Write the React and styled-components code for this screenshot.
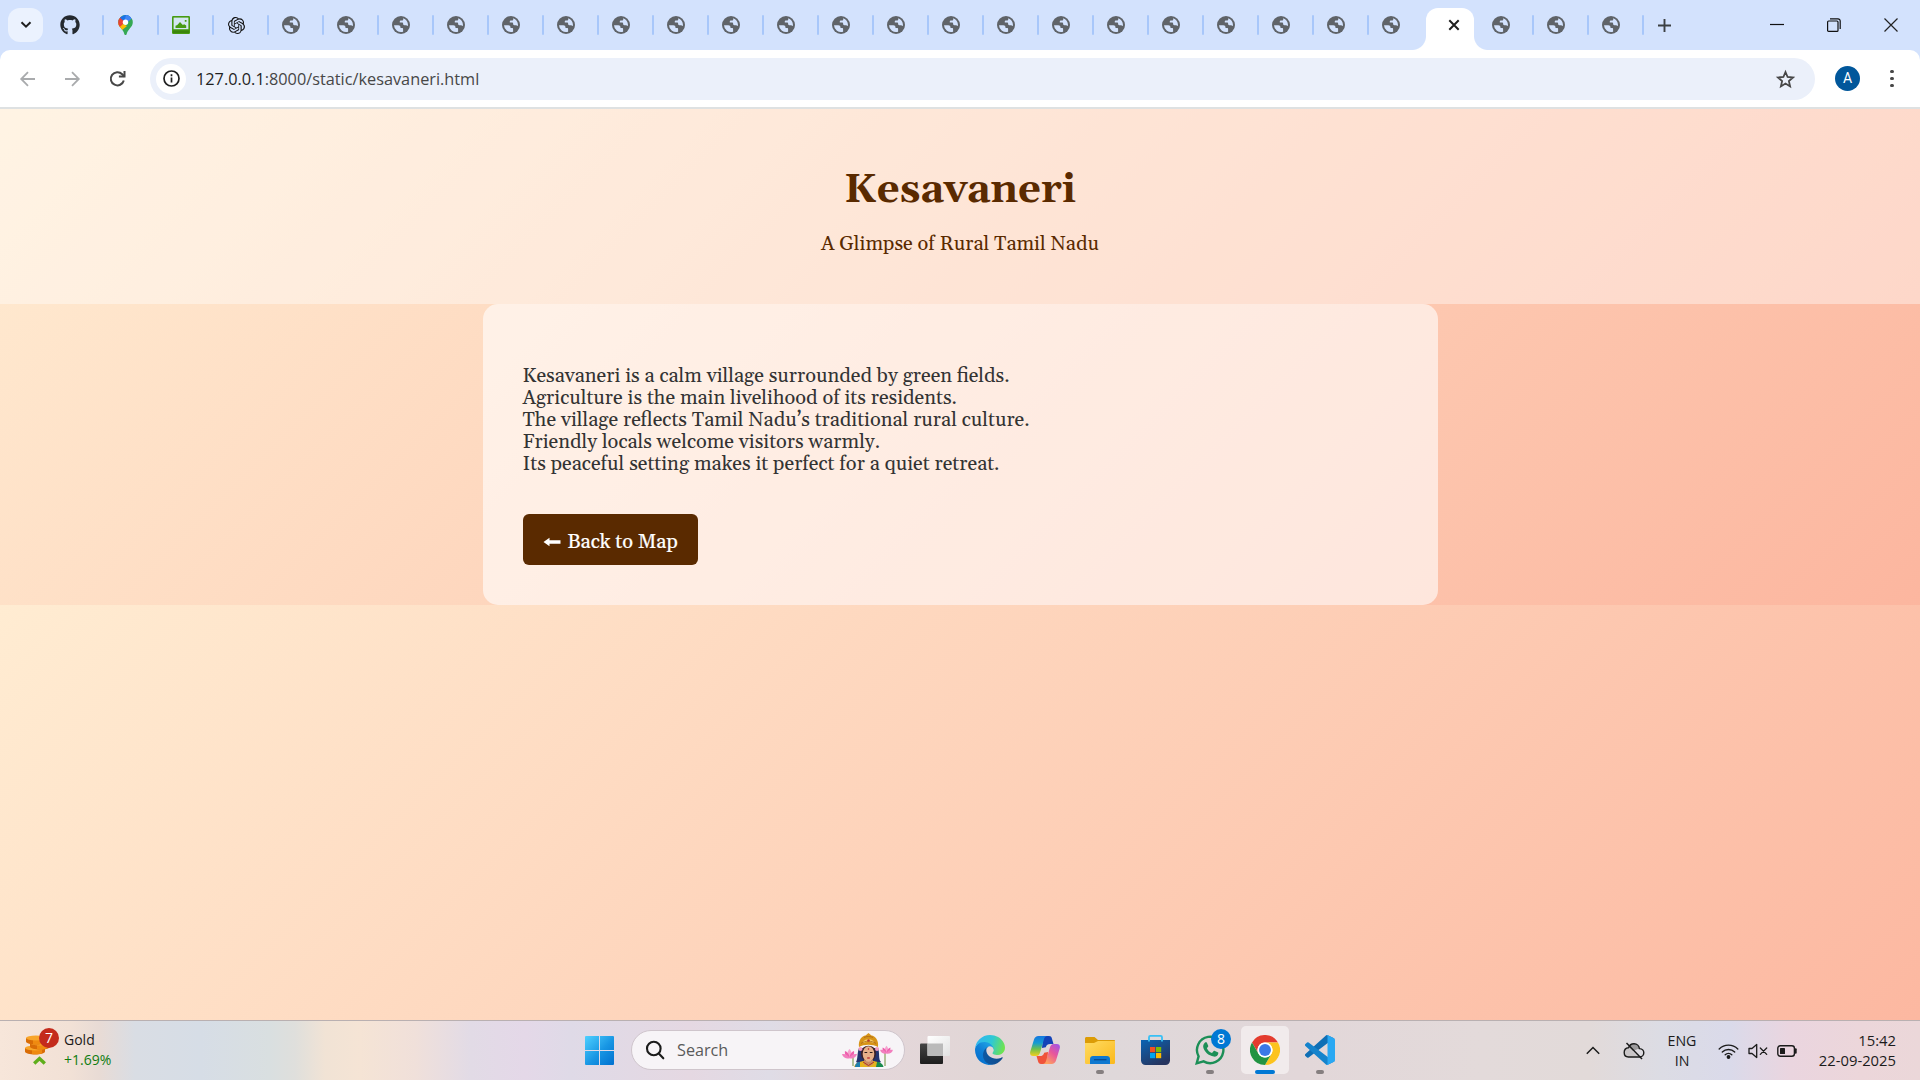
import React from "react";
import styled, { createGlobalStyle } from "styled-components";
import { FaGithub } from "react-icons/fa";
import { SiOpenai } from "react-icons/si";

const GlobalStyle = createGlobalStyle`
  * { box-sizing: border-box; }
  html, body { margin: 0; padding: 0; }
  body { overflow: hidden; }
  svg { display: block; flex: none; }
`;

const sans = `"Open Sans", "Noto Sans", sans-serif`;
const serif = `"Gelasio", "Liberation Serif", serif`;

const Screen = styled.div`
  display: flex;
  flex-direction: column;
  width: 1920px;
  height: 1080px;
  overflow: hidden;
  font-family: ${sans};
`;

/* ---------- Browser chrome ---------- */

const TabStrip = styled.div`
  display: flex;
  align-items: flex-start;
  height: 50px;
  flex: none;
  background: #d3e2fd;
`;

const TabSearch = styled.div`
  display: grid;
  place-items: center;
  width: 35px;
  height: 34px;
  margin: 8px 6px 0 8px;
  border-radius: 12px;
  background: #ebf2fe;
`;

const Tab = styled.div`
  display: flex;
  align-items: center;
  justify-content: space-between;
  width: 55px;
  height: 50px;
  padding-left: ${(p) => p.$pad || 13}px;
  flex: none;
`;

const Separator = styled.span`
  width: 2.5px;
  height: 20px;
  margin-bottom: 1px;
  border-radius: 2px;
  background: #a8c7fa;
`;

const ActiveTab = styled.div`
  display: grid;
  place-items: center;
  width: 48px;
  height: 42px;
  margin: 8px 5px 0 2px;
  padding: 0 0 8px 7px;
  border-radius: 12px 12px 0 0;
  background: #fff;
  position: relative;
  flex: none;
  &::before,
  &::after {
    content: "";
    position: absolute;
    bottom: 0;
    width: 14px;
    height: 14px;
  }
  &::before {
    left: -14px;
    background: radial-gradient(circle at 0 0, transparent 13.5px, #fff 14.5px);
  }
  &::after {
    right: -14px;
    background: radial-gradient(circle at 100% 0, transparent 13.5px, #fff 14.5px);
  }
`;

const NewTab = styled.div`
  display: flex;
  align-items: center;
  height: 50px;
  margin-left: 14px;
`;

const WindowControls = styled.div`
  display: flex;
  align-items: center;
  gap: 43px;
  height: 49px;
  margin: 0 22px 0 auto;
`;

const ToolbarBack = styled.div`
  flex: none;
  background: #d3e2fd;
`;

const Toolbar = styled.div`
  display: flex;
  align-items: center;
  height: 59px;
  padding: 0 20px 0 18px;
  background: #fff;
  border-bottom: 2px solid #dee1e2;
  border-radius: 10px 10px 0 0;
`;

const NavButtons = styled.div`
  display: flex;
  align-items: center;
  gap: 25px;
  width: 132px;
`;

const Omnibox = styled.div`
  display: flex;
  align-items: center;
  width: 1665px;
  height: 42px;
  padding: 0 20px 0 6px;
  border-radius: 21px;
  background: #ebf0fa;
`;

const SiteInfo = styled.span`
  display: grid;
  place-items: center;
  width: 30px;
  height: 30px;
  margin-right: 10px;
  border-radius: 50%;
  background: #fff;
`;

const Url = styled.span`
  flex: 1;
  padding-top: 1px;
  font-size: 16.3px;
  line-height: 22px;
  color: #474747;
`;

const Host = styled.span`
  color: #1f1f1f;
`;

const Avatar = styled.span`
  display: grid;
  place-items: center;
  width: 25px;
  height: 25px;
  margin: 0 0 0 20px;
  border-radius: 50%;
  background: #01579b;
  color: #fff;
  font: 14px/25px Roboto, sans-serif;
`;

const MenuDots = styled.span`
  display: grid;
  justify-items: center;
  gap: 3.2px;
  width: 4px;
  margin-left: 30px;
  i {
    width: 3.8px;
    height: 3.8px;
    border-radius: 50%;
    background: #474747;
  }
`;

/* ---------- Page ---------- */

const Page = styled.div`
  flex: 1;
  min-height: 0;
  font-family: ${serif};
  background: linear-gradient(135deg, #ffecd2, #fcb69f) 0 0 / 100% 496px repeat-y;
`;

const Header = styled.header`
  display: flex;
  flex-direction: column;
  align-items: center;
  height: 195px;
  padding-top: 59px;
  background: rgba(255, 255, 255, 0.4);
  color: #5a2a00;
`;

const Title = styled.h1`
  margin: 0 0 19px;
  font-size: 40px;
  line-height: 46px;
  font-weight: 700;
`;

const Subtitle = styled.p`
  margin: 0;
  font-size: 20px;
  line-height: 22px;
`;

const Card = styled.main`
  width: 955px;
  height: 301px;
  margin: 0 auto;
  padding: 61px 40px 40px;
  border-radius: 15px;
  background: rgba(255, 255, 255, 0.6);
`;

const Story = styled.p`
  margin: 0 0 39px;
  font-size: 20px;
  line-height: 22px;
  color: #333;
`;

const BackLink = styled.a`
  display: flex;
  align-items: center;
  width: 175px;
  height: 51px;
  padding: 5px 0 0 20px;
  gap: 7px;
  border-radius: 6px;
  background: #5a2a00;
  color: #fff;
  font-size: 20px;
  line-height: 22px;
  white-space: nowrap;
  -webkit-text-stroke: 0.2px #fff;
`;

/* ---------- Taskbar ---------- */

const Taskbar = styled.footer`
  display: flex;
  align-items: stretch;
  height: 60px;
  flex: none;
  border-top: 1px solid #b9b0b1;
  font-family: ${sans};
  color: #1b1b1b;
  background: linear-gradient(
    90deg,
    #f7e6da 0, #f2e1d6 70px, #e8dbd5 100px, #d9dde4 135px, #d6dde6 200px,
    #d9dfe0 270px, #dfdfdc 295px, #f1e3d5 325px, #f5e4d5 360px, #f0e0da 415px,
    #e2dbe6 470px, #e4d8e8 525px, #dfdae7 570px, #e5d8e2 690px, #dfdce6 770px,
    #e5d7db 850px, #e1d6d6 980px, #dfd8da 1110px, #e2d7d9 1300px, #e3dada 1480px,
    #e2dad9 1590px, #dcdce4 1660px, #dadaea 1730px, #ead5df 1790px,
    #ecd6da 1860px, #ebd7d9 1920px
  );
`;

const Widgets = styled.div`
  display: flex;
  width: 585px;
  padding-left: 25px;
`;

const WidgetIcon = styled.div`
  position: relative;
  width: 39px;
  padding-top: 14px;
`;

const Badge = styled.span`
  position: absolute;
  display: grid;
  place-items: center;
  top: ${(p) => p.$top}px;
  left: ${(p) => p.$left}px;
  width: 20px;
  height: 20px;
  border-radius: 50%;
  background: ${(p) => p.$color};
  color: #fff;
  font-size: 14px;
  line-height: 20px;
`;

const WidgetText = styled.div`
  padding-top: 9px;
  font-size: 14px;
  line-height: 20px;
`;

const Rise = styled.div`
  color: #107c10;
`;

const Center = styled.div`
  display: flex;
  align-items: center;
`;

const SearchBox = styled.div`
  display: flex;
  align-items: center;
  width: 274px;
  height: 40px;
  margin: 0 6px 1px 17px;
  padding: 0 10px 0 13px;
  border: 1px solid #cfc5cc;
  border-radius: 20px;
  background: #f7f4f7;
  color: #5a5a5a;
  font-size: 16.2px;
`;

const SearchLabel = styled.span`
  flex: 1;
  padding-left: 12px;
  line-height: 22px;
`;

const AppButton = styled.div`
  position: relative;
  display: grid;
  place-items: center;
  width: 48px;
  height: 48px;
  margin: 0 7px 1px 0;
  border-radius: 5px;
  background: ${(p) => (p.$active ? "#f1ebec" : "transparent")};
  &::after {
    content: "";
    position: absolute;
    bottom: 0;
    left: 50%;
    width: ${(p) => p.$bar || 0}px;
    height: 4px;
    border-radius: 2px;
    transform: translateX(-50%);
    background: ${(p) => (p.$active ? "#0078d4" : "#857f80")};
  }
`;

const Tray = styled.div`
  display: flex;
  align-items: center;
  margin-left: auto;
  padding-right: 24px;
  line-height: 20px;
`;

const Overflow = styled.span`
  display: flex;
  align-items: center;
  gap: 23px;
`;

const Language = styled.div`
  width: 40px;
  margin: 0 16px 0 17px;
  text-align: center;
  font-size: 14.2px;
`;

const Status = styled.div`
  display: flex;
  align-items: center;
  gap: 9px;
`;

const Clock = styled.div`
  width: 98px;
  padding-bottom: 2px;
  text-align: right;
  font-size: 14.8px;
`;

/* ---------- Icons ---------- */

const Globe = () => (
  <svg width="18" height="18" viewBox="0 0 18 18">
    <circle cx="9" cy="9" r="9" fill="#5f6368" />
    <path fill="#d3e2fd" d="M11.200 2.300c2.800.9 4.800 3.500 4.800 6.700 0 .400 0 .700-.1 1-.6-.5-1.300-.7-2-.7h-1.600c-.7 0-1.200-.5-1.200-1.200v-.9c0-.4-.3-.7-.7-.7H7.800V5.300c0-.5.4-.8.800-.8h1.500c.6 0 1.100-.5 1.100-1.100z" />
    <path fill="#d3e2fd" d="M2 9.200h4.300c1.300 0 2.200.9 2.200 2.100v.7h1.600c.6 0 1 .4 1 1v2.700A7 7 0 0 1 2 9.200z" />
  </svg>
);

const MapPin = () => (
  <svg width="15" height="20" viewBox="0 0 15 20">
    <defs><clipPath id="pin"><path d="M7.500 0A7.300 7.300 0 0 0 .2 7.300c0 2.600 1.300 4.300 3 6.300 1.700 2 2.600 3.500 3.100 5.300.2.700.5 1.100 1.200 1.100s1-.4 1.200-1.100c.5-1.800 1.400-3.300 3.100-5.300 1.700-2 3-3.700 3-6.300A7.300 7.300 0 0 0 7.500 0z" /></clipPath></defs>
    <g clipPath="url(#pin)">
      <path fill="#34a853" d="M0 0h15v20H0z" />
      <path fill="#fbbc04" d="M0 8l5.600 1.200L9 11 3 16H0z" />
      <path fill="#ea4335" d="M0 10V1l2-1 5.500 6.500L1.900 12z" />
      <path fill="#1a73e8" d="M1.700 2.600L6 0h8l1 2-7 6-2.500-2.200z" />
      <path fill="#4285f4" d="M8 0h5l1 3-5 5-2.500-2z" />
    </g>
    <circle cx="7.500" cy="7.200" r="2.700" fill="#fff" />
  </svg>
);

const Picture = () => (
  <svg width="18" height="18" viewBox="0 0 18 18">
    <rect width="18" height="18" rx="1.200" fill="#469b12" />
    <path fill="#d3e6f0" d="M1.600 1.600h14.800v11.600H1.600z" />
    <path fill="#469b12" d="M3.500 12V9.800L5.300 9 8 6l2.800 3 1.400-.8 2 1.300V12zM12.800 4h1.700v1.700h-1.700z" />
    <path fill="#3b850c" d="M1 14.500h16V17H1z" />
  </svg>
);

const line = { fill: "none", stroke: "currentColor" };

const Coins = () => (
  <svg width="24" height="20" viewBox="0 0 24 20">
    {[[0, 12], [5, 7], [1, 2]].map(([x, y]) => (
      <g key={y}>
        <path fill="#d96c06" d={`M${x} ${y + 1}v3.500c0 4 20 4 20 0V${y + 1}z`} />
        <path fill="#ef8a10" d={`M${x + 7} ${y + 2}v5c4 .5 8 .2 10-.8V${y + 2}z`} />
        <ellipse cx={x + 10} cy={y + 1} rx="10" ry="2.500" fill="#f8a52a" />
      </g>
    ))}
  </svg>
);

const UpMark = styled.svg`
  margin: 1px 0 0 8px;
`;

const WindowsLogo = () => (
  <svg width="29" height="29" viewBox="0 0 29 29">
    <defs><linearGradient id="win" x1="0" y1="0" x2="29" y2="29" gradientUnits="userSpaceOnUse"><stop stopColor="#4fd0ff" /><stop offset=".55" stopColor="#1795e3" /><stop offset="1" stopColor="#0070cf" /></linearGradient></defs>
    <path fill="url(#win)" d="M1 0h13v14H0V1a1 1 0 0 1 1-1zM15 0h13a1 1 0 0 1 1 1v13H15zM0 15h14v14H1a1 1 0 0 1-1-1zM15 15h14v13a1 1 0 0 1-1 1H15z" />
  </svg>
);

const lotus = (
  <g>
    <path fill="#f6a3cf" d="M0 0c-3-3-2-6 0-8 2 2 3 5 0 8z" />
    <path fill="#ef5fae" d="M0 1c-4-1-5-4-4.500-7C-1.500-5 0-2 0 1c0-3 1.500-6 4.500-7C5 -3 4 0 0 1z" />
    <path fill="#f27fbe" d="M0 1.500C-4 2-7-.5-7.500-3-4-3.500-1-2 0 1.500 1-2 4-3.500 7.500-3 7-.5 4 2 0 1.500z" />
  </g>
);

const Goddess = () => (
  <svg width="52" height="34" viewBox="0 0 52 34">
    <path d="M11 23v10M43 19v14" stroke="#6f8f3a" strokeWidth="1" fill="none" />
    <g transform="translate(7.500 24)">{lotus}</g>
    <g transform="translate(44.500 19.500) scale(.85)">{lotus}</g>
    <path fill="#24346e" d="M17 15c-2 5-1 11-3 14 4 3 20 3 25 0-3-3-1-9-3-14z" />
    <path fill="#e6b21e" d="M12 34c1-4 5-5 9-6h11c4 1 7 2 9 6z" />
    <path fill="#188a4d" d="M35 29c3 0 6 2 6.500 5H34z" />
    <path fill="#1d7fae" d="M13 34c0-3 2-5 5-5v5z" />
    <path fill="#c98c66" d="M22 25h9v6l-4.500 3-4.500-3z" />
    <path fill="#3c2228" d="M19 21c-1-11 16-11 15 0-.5 5-3 7-7.500 7S19.500 26 19 21z" />
    <ellipse cx="26.500" cy="21" rx="5.800" ry="7.700" fill="#e6b08a" />
    <path fill="#d79418" d="M17 14c-1-7 3-11 6.500-11.500L26.500 0l3 2.500C33 3 37 7 36 14c-5-3-14-3-19 0z" />
    <path fill="#f6d064" d="M21 10c0-5 11-5 11 0-3-1.500-8-1.500-11 0z" />
    <path stroke="#a8661a" strokeWidth=".8" fill="none" d="M19 10.500c4-3 11-3 15 0M22 4.500c2-1.300 7-1.300 9 0" />
    <circle cx="26.500" cy="7.500" r="1.300" fill="#b63a25" />
    <circle cx="18.500" cy="16" r="2" fill="#f09ac0" />
    <circle cx="35" cy="16" r="2" fill="#f09ac0" />
    <path d="M22.500 19.500h2.700M27.800 19.500h2.700" stroke="#2b1a1a" strokeWidth="1.200" />
    <circle cx="26.500" cy="16" r=".8" fill="#c4201c" />
    <path d="M25.200 25h2.600" stroke="#b8272b" strokeWidth="1.300" />
    <path d="M21 29l5.500 3.500L32 29" stroke="#b43a1a" strokeWidth="1" fill="none" />
  </svg>
);

const TaskView = () => (
  <svg width="30" height="28" viewBox="0 0 30 28">
    <defs>
      <linearGradient id="tvd" x2="0" y2="1"><stop stopColor="#454545" /><stop offset="1" stopColor="#1d1d1d" /></linearGradient>
      <linearGradient id="tvl" x2="1" y2="1"><stop stopColor="#fff" /><stop offset="1" stopColor="#e2e2e2" /></linearGradient>
    </defs>
    <rect x="0" y="7.500" width="23" height="20.500" rx="1" fill="url(#tvd)" />
    <rect x="7.500" y="0" width="22.500" height="20" rx="1" fill="url(#tvl)" />
    <path fill="#bababa" d="M7.500 7.500H23V20H7.500z" />
  </svg>
);

const Edge = () => (
  <svg width="30" height="30" viewBox="0 0 256 256">
    <defs>
      <linearGradient id="e1" x1="64" y1="177" x2="242" y2="177" gradientUnits="userSpaceOnUse"><stop stopColor="#0c59a4" /><stop offset="1" stopColor="#114a8b" /></linearGradient>
      <linearGradient id="e2" x1="140" y1="100" x2="40" y2="220" gradientUnits="userSpaceOnUse"><stop stopColor="#1b9de2" /><stop offset=".5" stopColor="#0f7fd6" /><stop offset="1" stopColor="#0673d0" /></linearGradient>
      <linearGradient id="e3" x1="20" y1="60" x2="240" y2="130" gradientUnits="userSpaceOnUse"><stop stopColor="#2fb8ee" /><stop offset=".5" stopColor="#2fc8d4" /><stop offset="1" stopColor="#6fe34e" /></linearGradient>
    </defs>
    <path fill="url(#e1)" d="M231 190.500c-3.400 1.800-6.900 3.400-10.500 4.700a101.900 101.900 0 0 1-35.900 6.500c-47.300 0-88.500-32.500-88.500-74.300a31.500 31.500 0 0 1 16.400-27.300c-42.800 1.800-53.800 46.400-53.800 72.500 0 73.900 68.100 81.400 82.800 81.400 7.900 0 19.800-2.300 27-4.600l1.300-.4a128.300 128.300 0 0 0 66.600-52.800 4 4 0 0 0-5.400-5.700z" />
    <path fill="url(#e2)" d="M105.700 241.400a79.200 79.200 0 0 1-22.700-21.300 80.700 80.700 0 0 1 29.500-120c3.200-1.500 8.500-4.100 15.600-4a32.400 32.400 0 0 1 25.700 13 31.900 31.900 0 0 1 6.300 18.700c0-.2 24.500-79.600-80-79.600-43.900 0-80 41.700-80 78.200a130.200 130.200 0 0 0 12.100 56 128 128 0 0 0 156.400 67 75.500 75.500 0 0 1-62.800-8z" />
    <path fill="url(#e3)" d="M152.300 148.900c-.9 1-3.400 2.500-3.400 5.600 0 2.600 1.700 5.200 4.800 7.300 14.300 10 41.400 8.600 41.500 8.600a59.600 59.600 0 0 0 30.300-8.300 61.400 61.400 0 0 0 30.400-52.900c.3-22.400-8-37.300-11.300-43.900C223.500 23.900 177.700 0 128 0A128 128 0 0 0 0 126.200c.5-36.500 36.800-66 80-66 3.500 0 23.500.3 42 10a72.600 72.600 0 0 1 30.900 29.300c6.100 10.600 7.200 24.100 7.200 29.500s-2.700 13.300-7.800 19.900z" />
  </svg>
);

const Copilot = () => (
  <svg width="30" height="28" viewBox="0 0 30 28">
    <defs>
      <linearGradient id="c1" x2="0" y2="1"><stop stopColor="#1677e0" /><stop offset=".35" stopColor="#159bd2" /><stop offset=".65" stopColor="#6dc04c" /><stop offset="1" stopColor="#f3cf1d" /></linearGradient>
      <linearGradient id="c2" x1="1" x2=".3" y2="1"><stop stopColor="#9a54ee" /><stop offset=".5" stopColor="#e8569b" /><stop offset="1" stopColor="#ffa25e" /></linearGradient>
    </defs>
    <path fill="#1443b8" d="M13 0h6c1.700 0 2.400.8 2.900 2.400L23.500 8h-3.300c-2.500 0-3.700.8-4.400 3.300L12 12z" />
    <path fill="#f0533b" d="M17 28h-6c-1.700 0-2.500-.8-2.900-2.400L6.500 20h3.300c2.500 0 3.700-.8 4.400-3.300L18 16z" />
    <path fill="url(#c1)" d="M8.500 0H17c-2 .3-2.600 1.700-3.200 3.700l-3.500 12c-.8 2.700-1.500 4.300-4.300 4.300H3.200c-2.700 0-3.600-2-2.900-4.500L4 3.500C4.700 1.200 6.200 0 8.500 0z" />
    <path fill="url(#c2)" d="M21.500 28H13c2-.3 2.600-1.700 3.200-3.700l3.500-12c.8-2.700 1.500-4.300 4.300-4.300h2.800c2.700 0 3.600 2 2.900 4.500L26 24.500c-.7 2.300-2.200 3.500-4.500 3.500z" />
  </svg>
);

const Explorer = () => (
  <svg width="30" height="27" viewBox="0 0 30 27">
    <defs><linearGradient id="fx" x2="1" y2="1"><stop stopColor="#ffdb62" /><stop offset="1" stopColor="#fbb91b" /></linearGradient></defs>
    <path fill="#dc9c06" d="M0 1.500C0 .6.600 0 1.500 0h8l3.500 3h16c.6 0 1 .4 1 1v6H0z" />
    <path fill="url(#fx)" d="M0 6h9l4-2h17v21.500c0 .8-.5 1.500-1.300 1.500H1.300C.5 27 0 26.300 0 25.500z" />
    <path fill="#0f78d0" d="M5 27v-5c0-1.700 1.300-3 3-3h14c1.700 0 3 1.300 3 3v5z" />
    <path stroke="#0a4a90" strokeWidth="1.300" d="M9 22.700h12.500" />
  </svg>
);

const Store = () => (
  <svg width="29" height="30" viewBox="0 0 29 30">
    <defs><linearGradient id="st" x2=".6" y2="1"><stop stopColor="#0a64b4" /><stop offset="1" stopColor="#26355f" /></linearGradient></defs>
    <path fill="url(#st)" d="M0 5h29v20.500c0 2.500-2 4.500-4.500 4.500h-20C2 30 0 28 0 25.500z" />
    <path fill="none" stroke="#38c0f5" strokeWidth="1.800" d="M8 6.500V2.200c0-.8.500-1.300 1.300-1.300h10.400c.8 0 1.300.5 1.300 1.300v4.300" />
    <path fill="#f25022" d="M9 12h5.200v5.200H9z" /><path fill="#7fba00" d="M15 12h5.200v5.200H15z" />
    <path fill="#00a4ef" d="M9 18h5.200v5.200H9z" /><path fill="#ffb900" d="M15 18h5.200v5.200H15z" />
  </svg>
);

const WhatsApp = () => (
  <svg width="30" height="30" viewBox="0 0 30 30">
    <path fill="none" stroke="#1c8f57" strokeWidth="2.400" d="M1.700 28.300l1.900-7A13.200 13.200 0 1 1 8.600 26.400z" />
    <path fill="#1c8f57" d="M10 7.500c.4-.4 1.500-.5 1.900.2l1.300 3.100c.2.600-.1 1-1.300 2.400.9 2.200 2.700 3.900 5.100 4.900l1.700-2c.3-.4.7-.4 1.200-.2l2.900 1.400c.6.300.6.600.5 1.200-.5 2.400-2.600 3.300-4.400 3.100-5.500-.9-9.800-5-10.700-9.600-.2-1.700.6-3.500 1.800-4.500z" />
  </svg>
);

const Chrome = () => (
  <svg width="30" height="30" viewBox="0 0 48 48">
    <circle cx="24" cy="24" r="24" fill="#fff" />
    <path fill="#e33b2e" d="M3.200 12A24 24 0 0 1 44.800 12H24a12 12 0 0 0-10.400 18z" />
    <path fill="#fcc31e" d="M44.800 12A24 24 0 0 1 24 48l10.400-18A12 12 0 0 0 24 12z" />
    <path fill="#229342" d="M24 48A24 24 0 0 1 3.200 12l10.400 18a12 12 0 0 0 20.800 0z" />
    <circle cx="24" cy="24" r="12" fill="#fff" />
    <circle cx="24" cy="24" r="9.500" fill="#3b78e7" />
  </svg>
);

const VsCode = () => (
  <svg width="30" height="30" viewBox="0 0 100 100">
    <path fill="#0f6fb5" d="M96.500 10.800L75.900.9a6.200 6.200 0 0 0-7.100 1.200L1.300 63.600a4.200 4.200 0 0 0 0 6.200l5.500 5a4.200 4.200 0 0 0 5.300.2L93.400 13.400c2.700-2 6.600-.1 6.600 3.300v-.2a6.200 6.200 0 0 0-3.500-5.700z" />
    <path fill="#1583cc" d="M96.500 89.200l-20.600 9.900a6.200 6.200 0 0 1-7.100-1.200L1.300 36.400a4.200 4.200 0 0 1 0-6.200l5.500-5a4.200 4.200 0 0 1 5.300-.2l81.300 61.600c2.700 2 6.600.1 6.600-3.300v.3a6.200 6.200 0 0 1-3.500 5.600z" />
    <path fill="#29a8f3" d="M75.900 99.100a6.200 6.200 0 0 1-7.100-1.200c2.300 2.300 6.200.7 6.200-2.600V4.700c0-3.300-3.900-4.900-6.200-2.600A6.200 6.200 0 0 1 75.900.9l20.600 9.900a6.200 6.200 0 0 1 3.500 5.700v67a6.200 6.200 0 0 1-3.500 5.700z" />
  </svg>
);

const CloudOff = () => (
  <svg width="22" height="18" viewBox="0 0 22 18">
    <path fill="#9c9a9c" d="M6 5.500C7 3 9 1.700 11.500 2c3 .3 4.500 2.500 4.700 4.500L10 9z" />
    <path fill="#c9c5c7" d="M2 11c0-3 2-5 5-4.500L15 15H5.500C3 15 2 13 2 11z" />
    <path {...line} strokeWidth="1.400" d="M5.600 5.700C6.400 3.200 8.500 1.700 11 1.700c3 0 5.200 2.200 5.400 4.900 2.500.2 4.400 1.800 4.400 4.200s-1.900 4.200-4.400 4.200H5.500C3 15 1.200 13.200 1.200 10.500c0-2.600 1.800-4.600 4.400-4.800z" />
    <path {...line} strokeWidth="1.500" d="M3.500 1l15.500 16" />
  </svg>
);

const Wifi = () => (
  <svg width="21" height="16" viewBox="0 0 21 16" {...line} strokeWidth="1.400" strokeLinecap="round">
    <path d="M1.200 6a13 13 0 0 1 18.600 0M4.300 9a8.800 8.800 0 0 1 12.400 0M7.200 11.800a4.700 4.700 0 0 1 6.600 0" />
    <circle cx="10.500" cy="14" r="1.200" fill="currentColor" />
  </svg>
);

const Muted = () => (
  <svg width="20" height="16" viewBox="0 0 20 16" {...line} strokeWidth="1.300" strokeLinejoin="round" strokeLinecap="round">
    <path d="M1 5.500h3L8.700 1.500v13L4 10.500H1z" />
    <path d="M12.300 5l6.400 6.400M18.700 5l-6.400 6.400" />
  </svg>
);

const Battery = () => (
  <svg width="21" height="12" viewBox="0 0 21 12">
    <rect x=".8" y=".8" width="16.600" height="10.400" rx="2.500" {...line} strokeWidth="1.400" />
    <rect x="3" y="3" width="5" height="6" rx=".6" fill="currentColor" />
    <path d="M18.700 4.300v3.400" stroke="currentColor" strokeWidth="2" strokeLinecap="round" />
  </svg>
);

/* ---------- Data ---------- */

const favicons = [
  <FaGithub size={20} color="#24292f" />,
  <MapPin />,
  <Picture />,
  <SiOpenai size={17} color="#111" />,
  ...Array.from({ length: 20 }, () => <Globe />),
];
const pads = [11, 14, 13, 14];

const story = [
  "Kesavaneri is a calm village surrounded by green fields.",
  "Agriculture is the main livelihood of its residents.",
  "The village reflects Tamil Nadu’s traditional rural culture.",
  "Friendly locals welcome visitors warmly.",
  "Its peaceful setting makes it perfect for a quiet retreat.",
];

const apps = [
  { icon: <TaskView /> },
  { icon: <Edge /> },
  { icon: <Copilot /> },
  { icon: <Explorer />, bar: 8 },
  { icon: <Store /> },
  { icon: <WhatsApp />, bar: 8, badge: "8" },
  { icon: <Chrome />, bar: 20, active: true },
  { icon: <VsCode />, bar: 8 },
];

export default function App() {
  return (
    <Screen>
      <GlobalStyle />
      <TabStrip>
        <TabSearch>
          <svg width="12" height="8" viewBox="0 0 12 8" fill="none" stroke="#1f1f1f" strokeWidth="2"><path d="M1.500 1.200L6 5.700l4.500-4.500" /></svg>
        </TabSearch>
        {favicons.map((icon, i) => (
          <Tab key={i} $pad={pads[i]}>
            {icon}
            <Separator />
          </Tab>
        ))}
        <Tab>
          <Globe />
        </Tab>
        <ActiveTab>
          <svg width="12" height="12" viewBox="0 0 12 12" stroke="#1f1f1f" strokeWidth="2"><path d="M1.300 1.300l9.400 9.400M10.700 1.300l-9.400 9.400" /></svg>
        </ActiveTab>
        {[0, 1, 2].map((i) => (
          <Tab key={i}>
            <Globe />
            <Separator />
          </Tab>
        ))}
        <NewTab>
          <svg width="13" height="13" viewBox="0 0 13 13" stroke="#3c4043" strokeWidth="1.900"><path d="M6.500 0v13M0 6.500h13" /></svg>
        </NewTab>
        <WindowControls>
          <svg width="14" height="14" viewBox="0 0 14 14" stroke="#111" strokeWidth="1.200"><path d="M0 6.500h14" /></svg>
          <svg width="14" height="14" viewBox="0 0 14 14" fill="none" stroke="#111" strokeWidth="1.200"><rect x=".6" y="3" width="10.400" height="10.400" rx="1" /><path d="M3 .9h8a2.200 2.200 0 0 1 2.200 2.200V11" /></svg>
          <svg width="14" height="14" viewBox="0 0 14 14" stroke="#222" strokeWidth="1.200"><path d="M.5.5l13 13M13.500.5l-13 13" /></svg>
        </WindowControls>
      </TabStrip>

      <ToolbarBack>
        <Toolbar>
          <NavButtons>
            <svg width="20" height="20" viewBox="0 0 20 20" fill="none" stroke="#a9abad" strokeWidth="1.800"><path d="M17 10H3.500M10 3.200L3.200 10l6.800 6.800" /></svg>
            <svg width="20" height="20" viewBox="0 0 20 20" fill="none" stroke="#a9abad" strokeWidth="1.800"><path d="M2 10h13.500M9 3.200l6.800 6.800L9 16.800" /></svg>
            <svg width="20" height="20" viewBox="0 0 20 20" fill="none" stroke="#474747" strokeWidth="2"><path d="M15.800 11.500A6.600 6.600 0 1 1 14.200 5.200L16.500 7.500" /><path d="M16.500 2v5.600h-5.600" /></svg>
          </NavButtons>
          <Omnibox>
            <SiteInfo>
              <svg width="17" height="17" viewBox="0 0 17 17" fill="none" stroke="#1f1f1f" strokeWidth="1.700"><circle cx="8.500" cy="8.500" r="7.500" /><path d="M8.500 7.500v5M8.500 4.300v1.900" /></svg>
            </SiteInfo>
            <Url>
              <Host>127.0.0.1</Host>:8000/static/kesavaneri.html
            </Url>
            <svg width="20" height="20" viewBox="0 0 20 20" fill="none" stroke="#474747" strokeWidth="1.800" strokeLinejoin="miter"><path d="M10.500 3l2.100 5 5.400.5-4.100 3.600 1.200 5.300-4.600-2.800-4.600 2.800 1.200-5.300L3 8.500 8.400 8z" /></svg>
          </Omnibox>
          <Avatar>A</Avatar>
          <MenuDots><i /><i /><i /></MenuDots>
        </Toolbar>
      </ToolbarBack>

      <Page>
        <Header>
          <Title>Kesavaneri</Title>
          <Subtitle>A Glimpse of Rural Tamil Nadu</Subtitle>
        </Header>
        <Card>
          <Story>
            {story.map((s) => (
              <React.Fragment key={s}>{s}<br /></React.Fragment>
            ))}
          </Story>
          <BackLink>
            <svg width="18" height="10" viewBox="0 0 18 10" fill="#fff"><path d="M.5 5L6.500.8v2.500h11v3.400h-11v2.500z" /></svg>
            Back to Map
          </BackLink>
        </Card>
      </Page>

      <Taskbar>
        <Widgets>
          <WidgetIcon>
            <Coins />
            <UpMark width="13" height="9" viewBox="0 0 13 9" fill="none" stroke="#5fae1b" strokeWidth="3.400"><path d="M1.200 7.500L6.500 2.500 11.800 7.500" /></UpMark>
            <Badge $top={7} $left={14} $color="#c42b1c">7</Badge>
          </WidgetIcon>
          <WidgetText>
            <div>Gold</div>
            <Rise>+1.69%</Rise>
          </WidgetText>
        </Widgets>
        <Center>
          <WindowsLogo />
          <SearchBox>
            <svg width="20" height="20" viewBox="0 0 20 20" fill="none" stroke="#1b1b1b" strokeWidth="2.100" strokeLinecap="round"><circle cx="8.800" cy="8.500" r="6.800" /><path d="M13.800 13.600l4.500 4.700" /></svg>
            <SearchLabel>Search</SearchLabel>
            <Goddess />
          </SearchBox>
          {apps.map(({ icon, bar, active, badge }, i) => (
            <AppButton key={i} $bar={bar} $active={active}>
              {icon}
              {badge && <Badge $top={3} $left={25} $color="#0078d4">{badge}</Badge>}
            </AppButton>
          ))}
        </Center>
        <Tray>
          <Overflow>
            <svg width="14" height="9" viewBox="0 0 14 9" fill="none" stroke="#1b1b1b" strokeWidth="1.500"><path d="M.8 7.800L7 1.500l6.200 6.300" /></svg>
            <CloudOff />
          </Overflow>
          <Language>ENG<br />IN</Language>
          <Status>
            <Wifi />
            <Muted />
            <Battery />
          </Status>
          <Clock>15:42<br />22-09-2025</Clock>
        </Tray>
      </Taskbar>
    </Screen>
  );
}
